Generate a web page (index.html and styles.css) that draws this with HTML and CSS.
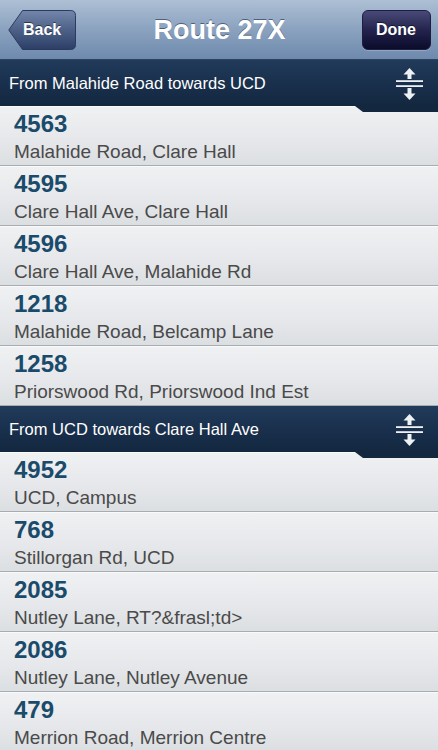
FILE: index.html
```html
<!DOCTYPE html>
<html lang="en">
<head>
  <meta charset="UTF-8">
  <meta name="viewport" content="width=device-width, initial-scale=1.0">
  <title>Route 27X</title>
  <link rel="stylesheet" href="styles.css">
</head>
<body>
  <div class="screen">
    <!-- Barra de navegación -->
    <div class="navbar">
      <button class="back-btn">
        <svg class="back-shape" width="68" height="40" viewBox="0 0 68 40">
          <defs>
            <linearGradient id="backGrad" x1="0" y1="0" x2="0" y2="1">
              <stop offset="0" stop-color="#7387ab"/>
              <stop offset="0.5" stop-color="#4d6188"/>
              <stop offset="1" stop-color="#2c3e66"/>
            </linearGradient>
          </defs>
          <path d="M14.5 0.5 H62.5 Q67.5 0.5 67.5 5.5 V34.5 Q67.5 39.5 62.5 39.5 H14.5 L0.8 20 Z" fill="url(#backGrad)" stroke="#2b3b5c" stroke-width="1"/>
        </svg>
        <span>Back</span>
      </button>
      <div class="title">Route 27X</div>
      <button class="done-btn">Done</button>
    </div>

    <!-- Primera dirección -->
    <div class="section-header">
      <span>From Malahide Road towards UCD</span>
      <svg class="sort-icon" width="28" height="32" viewBox="0 0 28 32">
        <polygon points="13.5,0 19.5,6.5 7.5,6.5" fill="#eef1f4"/>
        <rect x="11.5" y="6" width="4" height="5" fill="#eef1f4"/>
        <rect x="0" y="12.2" width="27" height="1.8" fill="#eef1f4"/>
        <rect x="0" y="17.2" width="27" height="1.8" fill="#eef1f4"/>
        <rect x="11.5" y="20" width="4" height="6" fill="#eef1f4"/>
        <polygon points="7.5,25.5 19.5,25.5 13.5,32" fill="#eef1f4"/>
      </svg>
    </div>
    <div class="stop">
      <div class="stop-num">4563</div>
      <div class="stop-name">Malahide Road, Clare Hall</div>
    </div>
    <div class="stop">
      <div class="stop-num">4595</div>
      <div class="stop-name">Clare Hall Ave, Clare Hall</div>
    </div>
    <div class="stop">
      <div class="stop-num">4596</div>
      <div class="stop-name">Clare Hall Ave, Malahide Rd</div>
    </div>
    <div class="stop">
      <div class="stop-num">1218</div>
      <div class="stop-name">Malahide Road, Belcamp Lane</div>
    </div>
    <div class="stop">
      <div class="stop-num">1258</div>
      <div class="stop-name">Priorswood Rd, Priorswood Ind Est</div>
    </div>

    <!-- Segunda dirección -->
    <div class="section-header">
      <span>From UCD towards Clare Hall Ave</span>
      <svg class="sort-icon" width="28" height="32" viewBox="0 0 28 32">
        <polygon points="13.5,0 19.5,6.5 7.5,6.5" fill="#eef1f4"/>
        <rect x="11.5" y="6" width="4" height="5" fill="#eef1f4"/>
        <rect x="0" y="12.2" width="27" height="1.8" fill="#eef1f4"/>
        <rect x="0" y="17.2" width="27" height="1.8" fill="#eef1f4"/>
        <rect x="11.5" y="20" width="4" height="6" fill="#eef1f4"/>
        <polygon points="7.5,25.5 19.5,25.5 13.5,32" fill="#eef1f4"/>
      </svg>
    </div>
    <div class="stop">
      <div class="stop-num">4952</div>
      <div class="stop-name">UCD, Campus</div>
    </div>
    <div class="stop">
      <div class="stop-num">768</div>
      <div class="stop-name">Stillorgan Rd, UCD</div>
    </div>
    <div class="stop">
      <div class="stop-num">2085</div>
      <div class="stop-name">Nutley Lane, RT?&amp;frasl;td&gt;</div>
    </div>
    <div class="stop">
      <div class="stop-num">2086</div>
      <div class="stop-name">Nutley Lane, Nutley Avenue</div>
    </div>
    <div class="stop">
      <div class="stop-num">479</div>
      <div class="stop-name">Merrion Road, Merrion Centre</div>
    </div>
  </div>
</body>
</html>
```

FILE: styles.css
```css
body {
  margin: 0;
  font-family: "Liberation Sans", Arial, sans-serif;
  background-color: #e4e6e9;
}
.screen {
  width: 438px;
  height: 750px;
  overflow: hidden;
}
.navbar {
  height: 59px;
  display: grid;
  grid-template-columns: 1fr auto 1fr;
  align-items: center;
  padding: 0 7px 0 8px;
  background: linear-gradient(to bottom, #adbfd4 0%, #8ea5c1 45%, #6d89ad 100%);
  border-bottom: 1px solid #2e4260;
}
.title {
  color: #fff;
  font-size: 27px;
  font-weight: bold;
  line-height: 30px;
  text-shadow: 0 -1px 0 rgba(30, 45, 70, 0.6);
}
button {
  font-family: "Liberation Sans", Arial, sans-serif;
  font-size: 16px;
  font-weight: bold;
  color: #fff;
  cursor: pointer;
  text-shadow: 0 -1px 0 rgba(0, 0, 0, 0.5);
}
.back-btn {
  justify-self: start;
  position: relative;
  width: 68px;
  height: 40px;
  padding: 0 0 0 15px;
  border: none;
  background: none;
  text-align: left;
  margin-top: 1px;
}
.back-shape {
  position: absolute;
  left: 0;
  top: 0;
}
.back-btn span {
  position: relative;
}
.done-btn {
  justify-self: end;
  width: 69px;
  height: 40px;
  padding: 0 1px 0 0;
  margin-top: 1px;
  border: 1px solid #1d1d40;
  border-radius: 6px;
  background: linear-gradient(to bottom, #4a4a78 0%, #23234e 50%, #0b0b2a 100%);
  box-shadow: 0 1px 0 rgba(255, 255, 255, 0.2);
}
.section-header {
  position: relative;
  z-index: 1;
  height: 46px;
  display: flex;
  justify-content: space-between;
  align-items: center;
  padding: 0 14px 0 9px;
  background: linear-gradient(to bottom, #213b5b 0%, #182e4a 60%, #13273f 100%);
  color: #fff;
  font-size: 16.5px;
  line-height: 44px;
}
.section-header::after {
  content: "";
  position: absolute;
  top: 100%;
  right: 0;
  width: 83px;
  height: 6px;
  background-color: #13273f;
  clip-path: polygon(0 0, 100% 0, 100% 100%, 8px 100%);
}
.sort-icon {
  margin-top: 2px;
}
.stop {
  box-sizing: border-box;
  height: 60px;
  padding: 3px 14px 0;
  background: linear-gradient(to bottom, #eff1f3 0%, #e5e7ea 60%, #dcdfe2 100%);
  border-bottom: 1px solid #a8acb1;
  box-shadow: inset 0 1px 0 #f9fafb;
}
.stop-num {
  color: #1b4b6b;
  font-size: 24px;
  font-weight: bold;
  line-height: 30px;
}
.stop-name {
  color: #4a4a4a;
  font-size: 19px;
  line-height: 26px;
  white-space: nowrap;
}
```
